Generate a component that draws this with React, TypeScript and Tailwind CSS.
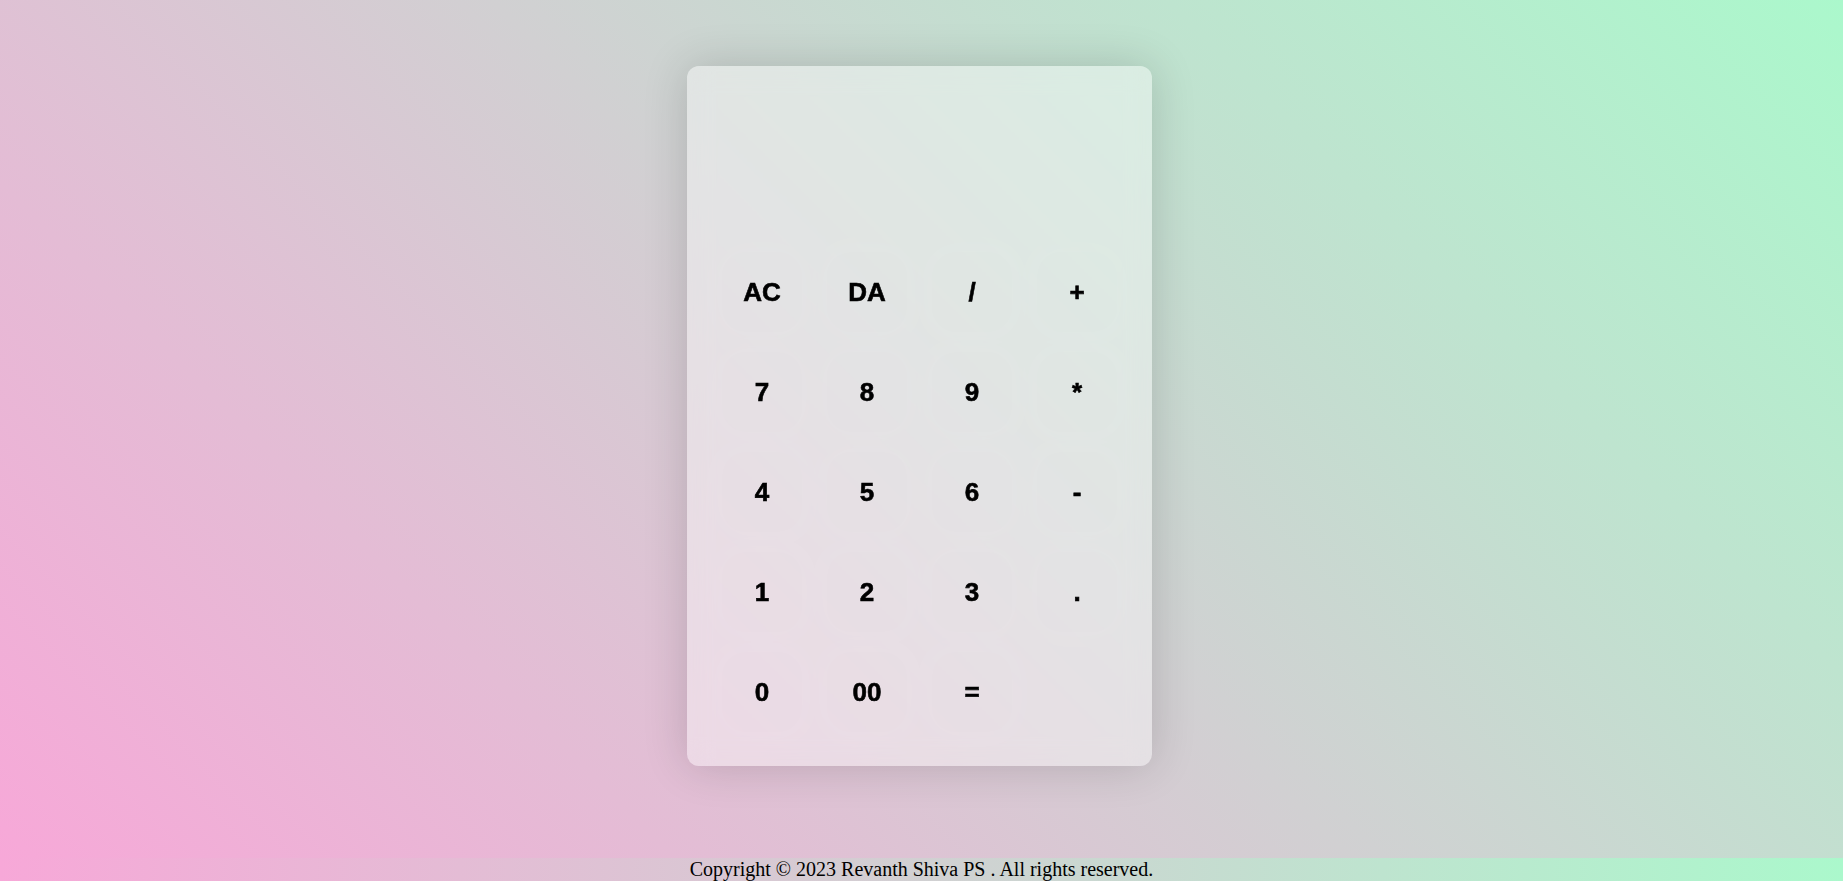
import type { FC } from 'react'

const keys = ['AC', 'DA', '/', '+', '7', '8', '9', '*', '4', '5', '6', '-', '1', '2', '3', '.', '0', '00', '=']

const Key: FC<{ label: string }> = ({ label }) => (
  <button className="h-[80px] w-[80px] rounded-3xl shadow-[0_0_24px_rgba(255,255,255,0.08)] flex items-center justify-center text-[26px] font-bold text-black [-webkit-text-stroke:0.6px_black] font-['Liberation_Sans',Arial,sans-serif] leading-none">
    {label}
  </button>
)

export default function App() {
  return (
    <div className="h-[881px] overflow-hidden bg-[linear-gradient(to_right,#f7a8d8,#abf8cc)]">
      {/* Main area */}
      <main className="h-[858px] flex justify-center pt-[66px] pr-[4px] bg-[linear-gradient(45deg,#f7a8d8,#abf8cc)]">
        <div className="w-[465px] h-[700px] rounded-xl bg-white/40 backdrop-blur-md shadow-[0_0_45px_rgba(0,0,0,0.16)] flex flex-col px-[35px] pt-[35px] pb-[34px]">
          {/* Display */}
          <div className="flex-1" />
          <div className="grid grid-cols-4 gap-x-[25px] gap-y-[20px] mt-[16px]">
            {keys.map((k) => (
              <Key key={k} label={k} />
            ))}
          </div>
        </div>
      </main>

      {/* Footer */}
      <footer className="h-[23px] text-center font-['Liberation_Serif','Times_New_Roman',serif] text-[20px] leading-[23px] text-black">
        Copyright © 2023 Revanth Shiva PS . All rights reserved.
      </footer>
    </div>
  )
}
